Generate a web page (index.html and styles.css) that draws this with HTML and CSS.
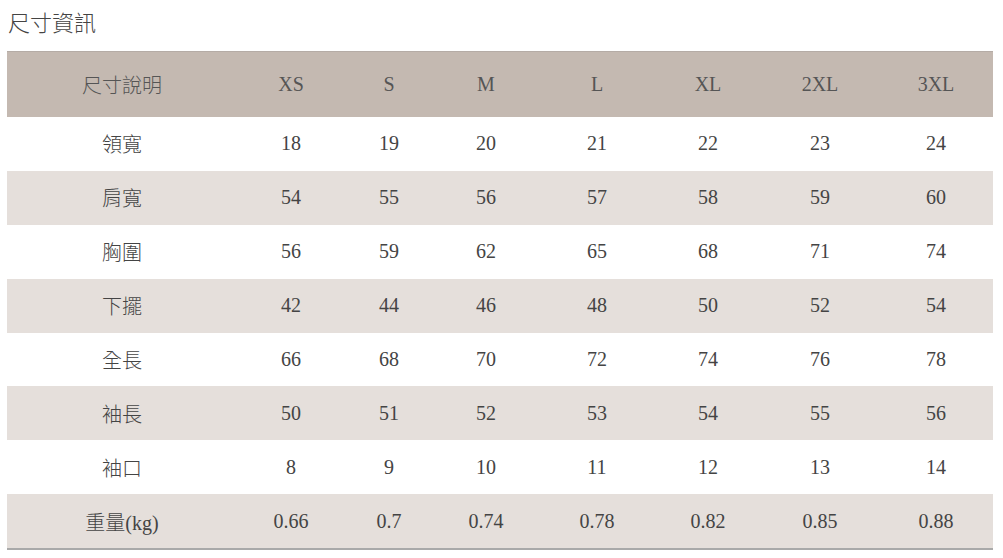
FILE: index.html
```html
<!DOCTYPE html>
<html lang="zh-Hant">
<head>
<meta charset="utf-8">
<link rel="stylesheet" href="styles.css">
</head>
<body>
<div class="page">
  <h2 class="title">尺寸資訊</h2>
  <table class="size-table">
    <thead>
      <tr><th>尺寸說明</th><th>XS</th><th>S</th><th>M</th><th>L</th><th>XL</th><th>2XL</th><th>3XL</th></tr>
    </thead>
    <tbody>
      <tr><td>領寬</td><td>18</td><td>19</td><td>20</td><td>21</td><td>22</td><td>23</td><td>24</td></tr>
      <tr><td>肩寬</td><td>54</td><td>55</td><td>56</td><td>57</td><td>58</td><td>59</td><td>60</td></tr>
      <tr><td>胸圍</td><td>56</td><td>59</td><td>62</td><td>65</td><td>68</td><td>71</td><td>74</td></tr>
      <tr><td>下擺</td><td>42</td><td>44</td><td>46</td><td>48</td><td>50</td><td>52</td><td>54</td></tr>
      <tr><td>全長</td><td>66</td><td>68</td><td>70</td><td>72</td><td>74</td><td>76</td><td>78</td></tr>
      <tr><td>袖長</td><td>50</td><td>51</td><td>52</td><td>53</td><td>54</td><td>55</td><td>56</td></tr>
      <tr><td>袖口</td><td>8</td><td>9</td><td>10</td><td>11</td><td>12</td><td>13</td><td>14</td></tr>
      <tr><td>重量(kg)</td><td>0.66</td><td>0.7</td><td>0.74</td><td>0.78</td><td>0.82</td><td>0.85</td><td>0.88</td></tr>
    </tbody>
  </table>
</div>
</body>
</html>
```
FILE: styles.css
```css
html, body {
  margin: 0;
  padding: 0;
  background: #ffffff;
}
.page {
  padding: 4px 10px 0 7px;
}
.title {
  margin: 0 0 13px 1px;
  font-family: "Noto Sans CJK TC", "Noto Sans", sans-serif;
  font-weight: 300;
  font-size: 22px;
  line-height: 34px;
  color: #444444;
}
.size-table {
  width: 986px;
  border-collapse: collapse;
  table-layout: fixed;
  font-family: "Liberation Serif", "Noto Sans CJK TC", serif;
  font-size: 20px;
  font-weight: 300;
  color: #444444;
  border-top: 1px solid #b5aca6;
  border-bottom: 2px solid #a9a9a9;
}
.size-table th,
.size-table td {
  text-align: center;
  padding: 0;
  font-weight: 300;
}
.size-table thead th {
  background: #c4b9b1;
  height: 65px;
  color: #555555;
}
.size-table tbody td {
  height: 53.9px;
}
.size-table tbody tr:nth-child(even) td {
  background: #e5dfdb;
}
.size-table th:nth-child(1) { width: 230px; }
.size-table th:nth-child(2) { width: 108px; }
.size-table th:nth-child(3) { width: 88px; }
.size-table th:nth-child(4) { width: 106px; }
.size-table th:nth-child(5) { width: 116px; }
.size-table th:nth-child(6) { width: 106px; }
.size-table th:nth-child(7) { width: 118px; }
.size-table th:nth-child(8) { width: 114px; }
```
